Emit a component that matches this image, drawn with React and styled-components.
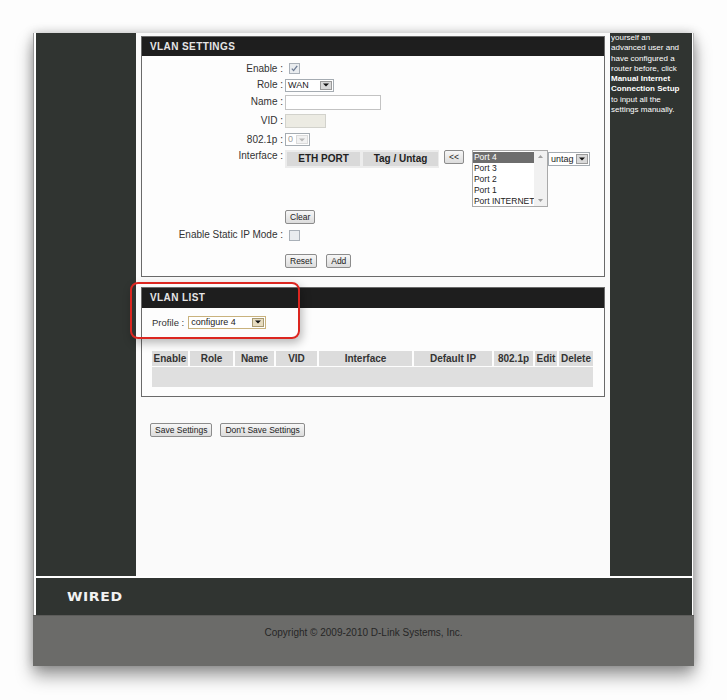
import React from 'react';
import styled, { createGlobalStyle } from 'styled-components';

const Global = createGlobalStyle`
  html, body { margin: 0; padding: 0; background: #fdfdfd; }
  body { font-family: "Liberation Sans", Arial, sans-serif; }
  * { box-sizing: border-box; }
`;

const Page = styled.div`
  position: relative;
  width: 727px;
  height: 700px;
  padding: 33px 0 0 33px;
  overflow: hidden;
`;

const Window = styled.div`
  width: 661px;
  box-shadow: 0 10px 16px rgba(0, 0, 0, 0.38), 0 0 10px rgba(0, 0, 0, 0.22);
`;

const Frame = styled.div`
  background: #ffffff;
  border-left: 1px solid #9a9a9a;
  border-right: 1px solid #b5b5b5;
  padding: 0 1px 0 2px;
`;

const Main = styled.div`
  display: grid;
  grid-template-columns: 100px 474px 82px;
  height: 543px;
`;

const DarkColumn = styled.div`
  background: #303431;
  overflow: hidden;
`;

const SideText = styled.div`
  color: #ffffff;
  font-size: 8px;
  line-height: 10.3px;
  padding: 0 0 0 1px;
  white-space: nowrap;
`;

const SideBold = styled.div`
  font-weight: bold;
`;

const Content = styled.div`
  background: #fafafa;
  padding: 3px 5px 0 5px;
`;

const Box = styled.div`
  border: 1px solid #6a6a6a;
  background: #fdfdfd;
  margin-top: ${p => p.$mt || 0}px;
`;

const BoxHeader = styled.div`
  background: #1e1e1e;
  color: #e6e6e6;
  font-weight: bold;
  font-size: 10px;
  letter-spacing: 0.4px;
  height: ${p => p.$h || 19}px;
  line-height: ${p => p.$h || 19}px;
  padding-left: 8px;
`;

const Form = styled.div`
  padding: 4px 0 7px 0;
`;

const Row = styled.div`
  display: grid;
  grid-template-columns: 141px 1fr;
  column-gap: 2px;
  align-items: ${p => (p.$top ? 'start' : 'center')};
  height: ${p => p.$h}px;
  margin-top: ${p => p.$mt || 0}px;
`;

const Label = styled.div`
  text-align: right;
  font-size: 10px;
  color: #333;
  line-height: 12px;
  margin-top: ${p => p.$mt || 0}px;
`;

const Controls = styled.div`
  display: flex;
  align-items: flex-start;
  gap: ${p => p.$gap || 0}px;
`;

const CheckWrap = styled.span`
  display: inline-flex;
  width: 11px;
  height: 11px;
  margin-left: 4px;
  border: 1px solid #a9b0b8;
  background: #e9ecef;
  align-items: center;
  justify-content: center;
`;

const Checkbox = ({ checked }) => (
  <CheckWrap>
    {checked && (
      <svg width="9" height="9" viewBox="0 0 9 9">
        <path d="M1.8 4.6 L3.6 6.6 L7.2 1.8" fill="none" stroke="#6c7a92" strokeWidth="1.3" />
      </svg>
    )}
  </CheckWrap>
);

const SelectBox = styled.div`
  display: inline-flex;
  width: ${p => p.$w}px;
  height: ${p => p.$h || 13}px;
  border: 1px solid ${p => p.$border || '#a5acb2'};
  background: #fff;
  font-size: 9px;
  color: ${p => (p.$disabled ? '#9a9a9a' : '#222')};
  margin-top: ${p => p.$mt || 0}px;
`;

const SelectText = styled.span`
  flex: 1;
  padding-left: 2px;
  line-height: ${p => (p.$h || 13) - 2}px;
  white-space: nowrap;
  overflow: hidden;
`;

const SelectArrow = styled.span`
  width: 12px;
  margin: 1px;
  display: flex;
  align-items: center;
  justify-content: center;
  background: ${p => (p.$disabled ? '#f2f2f2' : p.$bg || '#d9d9d9')};
  border: 1px solid ${p => (p.$disabled ? '#dadada' : p.$edge || '#9a9a9a')};
`;

const Select = ({ w, h, text, disabled, border, arrowBg, arrowEdge, mt }) => (
  <SelectBox $w={w} $h={h} $disabled={disabled} $border={border} $mt={mt}>
    <SelectText $h={h}>{text}</SelectText>
    <SelectArrow $disabled={disabled} $bg={arrowBg} $edge={arrowEdge}>
      <svg width="6" height="4" viewBox="0 0 6 4">
        <path d="M0 0.5 H6 L3 3.5 Z" fill={disabled ? '#b8b8b8' : '#111'} />
      </svg>
    </SelectArrow>
  </SelectBox>
);

const TextInput = styled.div`
  width: ${p => p.$w}px;
  height: ${p => p.$h || 15}px;
  border: 1px solid ${p => (p.$disabled ? '#d2d2cc' : '#c3c3c3')};
  background: ${p => (p.$disabled ? '#ecebe3' : '#ffffff')};
`;

const Button = styled.button`
  height: ${p => p.$h || 14}px;
  padding: 0 4px;
  font-family: "Liberation Sans", Arial, sans-serif;
  font-size: 8.5px;
  line-height: 12px;
  color: #222;
  background: linear-gradient(#f7f7f7, #dcdcdc);
  border: 1px solid #8c8c8c;
  border-radius: 2px;
  margin-left: ${p => p.$ml || 0}px;
  margin-top: ${p => p.$mt || 0}px;
`;

const PortTable = styled.div`
  display: grid;
  grid-template-columns: 73px 75px;
  column-gap: 3px;
  width: 154px;
  height: 18px;
  padding: 2px 2px;
  background: #ececec;
  margin-top: 1px;
`;

const PortHead = styled.div`
  background: #d9d9d9;
  font-weight: bold;
  font-size: 10px;
  color: #222;
  text-align: center;
  line-height: 14px;
`;

const ListBox = styled.div`
  display: flex;
  width: 76px;
  height: 57px;
  border: 1px solid #a9a9a9;
  background: #fff;
  margin-left: 8px;
  margin-top: 1px;
`;

const ListItems = styled.div`
  flex: 1;
  padding-top: 1px;
`;

const ListItem = styled.div`
  font-size: 8.5px;
  line-height: 11px;
  height: 11px;
  padding-left: 1px;
  white-space: nowrap;
  color: ${p => (p.$sel ? '#fff' : '#222')};
  background: ${p => (p.$sel ? '#6d6d6d' : 'transparent')};
`;

const ScrollBar = styled.div`
  width: 13px;
  background: #f1f1f1;
  display: flex;
  flex-direction: column;
  justify-content: space-between;
  align-items: center;
  padding: 4px 0;
`;

const ProfileRow = styled.div`
  display: flex;
  align-items: center;
  gap: 4px;
  height: 18px;
  margin: 5px 0 0 10px;
`;

const ProfileLabel = styled.span`
  font-size: 9.5px;
  color: #333;
`;

const ListTable = styled.div`
  display: grid;
  grid-template-columns: 36px 43px 39px 41px 93px 78px 39px 22px 34px;
  column-gap: 2px;
  row-gap: 1px;
  margin: 20px 10px 9px 10px;
`;

const ListHead = styled.div`
  background: #dcdcdc;
  height: 15px;
  line-height: 15px;
  font-size: 10px;
  font-weight: bold;
  color: #333;
  text-align: center;
  white-space: nowrap;
`;

const ListBody = styled.div`
  grid-column: 1 / -1;
  height: 20px;
  background: #dfdfdf;
`;

const SaveRow = styled.div`
  display: flex;
  gap: 8px;
  margin: 26px 0 0 9px;
`;

const WiredBar = styled.div`
  margin-top: 2px;
  height: 37px;
  background: #303431;
  display: flex;
  align-items: center;
  padding-left: 31px;
`;

const WiredText = styled.span`
  color: #f2f2f2;
  font-weight: bold;
  font-size: 14px;
  letter-spacing: 0.6px;
  font-family: "DejaVu Sans", "Liberation Sans", sans-serif;
  transform: scaleY(0.85);
`;

const Footer = styled.div`
  height: 51px;
  background: #6b6b69;
  border-top: 1px solid #5c5c5a;
  text-align: center;
  font-size: 10px;
  color: #262626;
  padding-top: 11px;
`;

const Callout = styled.div`
  position: absolute;
  left: 130px;
  top: 282px;
  width: 170px;
  height: 57px;
  border: 2px solid #dc2620;
  border-radius: 8px;
  box-shadow: 2px 4px 10px rgba(0, 0, 0, 0.28);
  pointer-events: none;
`;

export default function App() {
  return (
    <>
      <Global />
      <Page>
        <Window>
          <Frame>
            <Main>
              <DarkColumn />
              <Content>
                <Box>
                  <BoxHeader>VLAN SETTINGS</BoxHeader>
                  <Form>
                    <Row $h={17}>
                      <Label>Enable :</Label>
                      <Controls><Checkbox checked /></Controls>
                    </Row>
                    <Row $h={16}>
                      <Label>Role :</Label>
                      <Controls><Select w={49} text="WAN" /></Controls>
                    </Row>
                    <Row $h={18}>
                      <Label>Name :</Label>
                      <Controls><TextInput $w={96} /></Controls>
                    </Row>
                    <Row $h={19}>
                      <Label>VID :</Label>
                      <Controls><TextInput $w={41} $h={14} $disabled /></Controls>
                    </Row>
                    <Row $h={19}>
                      <Label>802.1p :</Label>
                      <Controls><Select w={25} text="0" disabled /></Controls>
                    </Row>
                    <Row $h={59} $top>
                      <Label $mt={1}>Interface :</Label>
                      <Controls>
                        <PortTable>
                          <PortHead>ETH PORT</PortHead>
                          <PortHead>Tag / Untag</PortHead>
                        </PortTable>
                        <Button $ml={5} $mt={1}>&lt;&lt;</Button>
                        <ListBox>
                          <ListItems>
                            <ListItem $sel>Port 4</ListItem>
                            <ListItem>Port 3</ListItem>
                            <ListItem>Port 2</ListItem>
                            <ListItem>Port 1</ListItem>
                            <ListItem>Port INTERNET</ListItem>
                          </ListItems>
                          <ScrollBar>
                            <svg width="5" height="3" viewBox="0 0 5 3"><path d="M0 3 L2.5 0 L5 3 Z" fill="#a0a0a0" /></svg>
                            <svg width="5" height="3" viewBox="0 0 5 3"><path d="M0 0 L2.5 3 L5 0 Z" fill="#a0a0a0" /></svg>
                          </ScrollBar>
                        </ListBox>
                        <Select w={42} h={14} text="untag" mt={3} />
                      </Controls>
                    </Row>
                    <Row $h={18}>
                      <Label />
                      <Controls><Button>Clear</Button></Controls>
                    </Row>
                    <Row $h={18}>
                      <Label>Enable Static IP Mode :</Label>
                      <Controls><Checkbox /></Controls>
                    </Row>
                    <Row $h={16} $mt={9}>
                      <Label />
                      <Controls $gap={9}>
                        <Button>Reset</Button>
                        <Button>Add</Button>
                      </Controls>
                    </Row>
                  </Form>
                </Box>
                <Box $mt={10}>
                  <BoxHeader $h={20}>VLAN LIST</BoxHeader>
                  <ProfileRow>
                    <ProfileLabel>Profile :</ProfileLabel>
                    <Select w={78} h={13} text="configure 4" border="#c9b27d" arrowBg="#e7dcc0" arrowEdge="#a89a72" />
                  </ProfileRow>
                  <ListTable>
                    <ListHead>Enable</ListHead>
                    <ListHead>Role</ListHead>
                    <ListHead>Name</ListHead>
                    <ListHead>VID</ListHead>
                    <ListHead>Interface</ListHead>
                    <ListHead>Default IP</ListHead>
                    <ListHead>802.1p</ListHead>
                    <ListHead>Edit</ListHead>
                    <ListHead>Delete</ListHead>
                    <ListBody />
                  </ListTable>
                </Box>
                <SaveRow>
                  <Button>Save Settings</Button>
                  <Button>Don't Save Settings</Button>
                </SaveRow>
              </Content>
              <DarkColumn>
                <SideText>
                  <div>yourself an</div>
                  <div>advanced user and</div>
                  <div>have configured a</div>
                  <div>router before, click</div>
                  <SideBold>Manual Internet</SideBold>
                  <SideBold>Connection Setup</SideBold>
                  <div>to input all the</div>
                  <div>settings manually.</div>
                </SideText>
              </DarkColumn>
            </Main>
            <WiredBar>
              <WiredText>WIRED</WiredText>
            </WiredBar>
          </Frame>
          <Footer>Copyright © 2009-2010 D-Link Systems, Inc.</Footer>
        </Window>
        <Callout />
      </Page>
    </>
  );
}
